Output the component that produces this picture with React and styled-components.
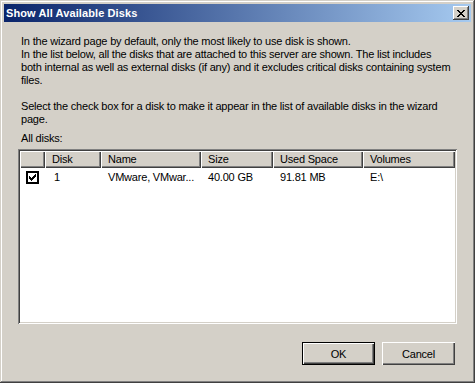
import React from 'react';
import styled, { createGlobalStyle } from 'styled-components';

const GlobalStyle = createGlobalStyle`
  html, body {
    margin: 0;
    padding: 0;
    background: #d4d0c8;
  }
  body {
    font-family: 'Liberation Sans', Arial, sans-serif;
    font-size: 11px;
    letter-spacing: -0.2px;
    color: #000;
  }
`

const Window = styled.div`
  width: 475px;
  height: 383px;
  box-sizing: border-box;
  padding: 4px;
  background: #d4d0c8;
  display: flex;
  flex-direction: column;
  box-shadow:
    inset -1px -1px #404040,
    inset 1px 1px #d4d0c8,
    inset -2px -2px #808080,
    inset 2px 2px #ffffff;
`

const TitleBar = styled.div`
  height: 18px;
  display: flex;
  align-items: center;
  justify-content: space-between;
  padding: 0 2px 0 2px;
  background: linear-gradient(to right, #0a246a, #a6caf0);
  h1 {
    margin: 0;
    font-size: 11px;
    font-weight: bold;
    color: #fff;
    letter-spacing: 0.1px;
  }
`

const CloseButton = styled.div`
  width: 16px;
  height: 14px;
  box-sizing: border-box;
  background: #d4d0c8;
  display: flex;
  align-items: center;
  justify-content: center;
  box-shadow:
    inset -1px -1px #404040,
    inset 1px 1px #ffffff,
    inset -2px -2px #808080;
`

const Body = styled.div`
  flex: 1;
  display: flex;
  flex-direction: column;
  padding: 13px 14px 0 14px;
`

const Text = styled.div`
  padding-left: 3px;
  line-height: 13px;
  margin-bottom: ${p => p.gap || 0}px;
  span {
    display: block;
    white-space: nowrap;
  }
`

const ListBox = styled.div`
  height: 175px;
  box-sizing: border-box;
  background: #fff;
  padding: 2px;
  box-shadow:
    inset 1px 1px #808080,
    inset -1px -1px #ffffff,
    inset 2px 2px #404040,
    inset -2px -2px #d4d0c8;
`

const Grid = styled.div`
  display: grid;
  grid-template-columns: 25px 56px 100px 72px 90px 1fr;
`

const HeadCell = styled.div`
  height: 17px;
  line-height: 17px;
  padding-left: 7px;
  background: #d4d0c8;
  box-shadow:
    inset 1px 1px #ffffff,
    inset -1px -1px #404040,
    inset -2px -2px #808080;
`

const Cell = styled.div`
  height: 18px;
  line-height: 19px;
  padding-left: ${p => p.indent || 7}px;
  white-space: nowrap;
`

const CheckCell = styled.div`
  height: 18px;
  display: flex;
  align-items: center;
  padding-left: 6px;
`

const CheckBox = styled.div`
  width: 13px;
  height: 13px;
  box-sizing: border-box;
  border: 2px solid #000;
  background: #fff;
  display: flex;
  align-items: center;
  justify-content: center;
`

const ButtonRow = styled.div`
  display: flex;
  justify-content: flex-end;
  gap: 7px;
  margin-top: 18px;
  padding-right: 2px;
`

const Button = styled.div`
  width: 73px;
  height: 23px;
  box-sizing: border-box;
  display: flex;
  align-items: center;
  justify-content: center;
  background: #d4d0c8;
  box-shadow: ${p => p.primary
    ? 'inset 1px 1px #000, inset -1px -1px #000, inset 2px 2px #fff, inset -2px -2px #404040, inset -3px -3px #808080'
    : 'inset 1px 1px #fff, inset -1px -1px #404040, inset -2px -2px #808080'};
`

const columns = ['Disk', 'Name', 'Size', 'Used Space', 'Volumes'];

const disks = [
  { id: '1', name: 'VMware, VMwar...', size: '40.00 GB', used: '91.81 MB', volumes: 'E:\\' },
];

export default function App() {
  return (
    <>
      <GlobalStyle />
      <Window>
        <TitleBar>
          <h1>Show All Available Disks</h1>
          <CloseButton>
            <svg width="8" height="7" viewBox="0 0 8 7" shapeRendering="crispEdges">
              <path d="M0 0h2v1h-2zM6 0h2v1h-2zM1 1h2v1h-2zM5 1h2v1h-2zM2 2h4v1h-4zM3 3h2v1h-2zM2 4h4v1h-4zM1 5h2v1h-2zM5 5h2v1h-2zM0 6h2v1h-2zM6 6h2v1h-2z" fill="#000" />
            </svg>
          </CloseButton>
        </TitleBar>
        <Body>
          <Text gap={13}>
            <span>In the wizard page by default, only the most likely to use disk is shown.</span>
            <span>In the list below, all the disks that are attached to this server are shown. The list includes</span>
            <span>both internal as well as external disks (if any) and it excludes critical disks containing system</span>
            <span>files.</span>
          </Text>
          <Text gap={6}>
            <span>Select the check box for a disk to make it appear in the list of available disks in the wizard</span>
            <span>page.</span>
          </Text>
          <Text gap={4}>
            <span>All disks:</span>
          </Text>
          <ListBox>
            <Grid>
              <HeadCell />
              {columns.map(c => <HeadCell key={c}>{c}</HeadCell>)}
              {disks.map(d => (
                <React.Fragment key={d.id}>
                  <CheckCell>
                    <CheckBox>
                      <svg width="7" height="7" viewBox="0 0 7 7" shapeRendering="crispEdges">
                        <path d="M6 0h1v1h-1zM5 1h2v1h-2zM0 2h1v1h-1zM4 2h3v1h-3zM0 3h2v1h-2zM3 3h3v1h-3zM0 4h5v1h-5zM1 5h3v1h-3zM2 6h1v1h-1z" fill="#000" />
                      </svg>
                    </CheckBox>
                  </CheckCell>
                  <Cell indent={9}>{d.id}</Cell>
                  <Cell>{d.name}</Cell>
                  <Cell>{d.size}</Cell>
                  <Cell>{d.used}</Cell>
                  <Cell>{d.volumes}</Cell>
                </React.Fragment>
              ))}
            </Grid>
          </ListBox>
          <ButtonRow>
            <Button primary>OK</Button>
            <Button>Cancel</Button>
          </ButtonRow>
        </Body>
      </Window>
    </>
  );
}
